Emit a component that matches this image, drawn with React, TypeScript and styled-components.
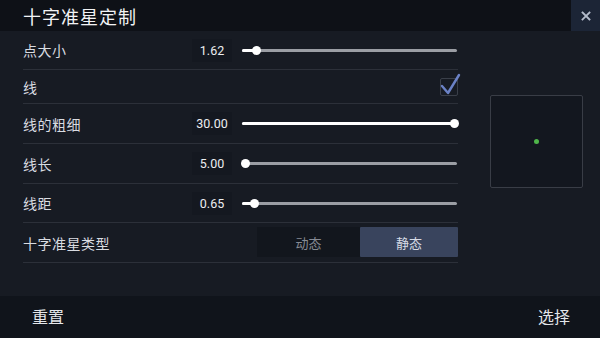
import React, { useState } from 'react';
import styled, { createGlobalStyle } from 'styled-components';

const GlobalStyle = createGlobalStyle`
  html, body {
    margin: 0;
    padding: 0;
    background: #171b23;
  }
  body {
    font-family: 'Noto Sans CJK SC', 'Noto Sans', sans-serif;
    color: #e6e8ec;
  }
`;

type SliderRow = {
  label: string;
  value: number;
  pos: number; // 0..1, where the thumb sits on the track
  height: number;
};

const TOP_ROWS: SliderRow[] = [{ label: '点大小', value: 1.62, pos: 0.054, height: 38 }];

const BOTTOM_ROWS: SliderRow[] = [
  { label: '线的粗细', value: 30, pos: 1, height: 39 },
  { label: '线长', value: 5, pos: 0, height: 39 },
  { label: '线距', value: 0.65, pos: 0.044, height: 38 },
];

const TRACK_W = 215;
const THUMB_INSET = 3;

const Slider = ({ pos }: { pos: number }) => {
  const x = THUMB_INSET + pos * (TRACK_W - THUMB_INSET * 2);
  return (
    <Track>
      <Fill style={{ width: `${x}px` }} />
      <Thumb style={{ left: `${x}px` }} />
    </Track>
  );
};

const App = () => {
  const [mode, setMode] = useState<'dynamic' | 'static'>('static');
  const [lineOn, setLineOn] = useState(true);

  const renderSlider = (r: SliderRow) => (
    <Row key={r.label} $h={r.height}>
      <Label>{r.label}</Label>
      <ValueBox>{r.value.toFixed(2)}</ValueBox>
      <Slider pos={r.pos} />
    </Row>
  );

  return (
    <>
      <GlobalStyle />
      <Screen>
        <Header>
          <Title>十字准星定制</Title>
          <CloseButton aria-label="close">
            <svg width="10" height="10" viewBox="0 0 10 10">
              <path d="M1.5 1.5 L8.5 8.5 M8.5 1.5 L1.5 8.5" stroke="#b4bccb" strokeWidth="1.8" strokeLinecap="square" />
            </svg>
          </CloseButton>
        </Header>
        <Body>
          <Settings>
            {TOP_ROWS.map(renderSlider)}
            <Row $h={33}>
              <Label>线</Label>
              <CheckBox onClick={() => setLineOn(!lineOn)}>
                {lineOn && (
                  <svg width="22" height="24" viewBox="0 0 22 24">
                    <path d="M2 13 L8 20 L19 2" stroke="#6b82c6" strokeWidth="2.4" fill="none" strokeLinecap="round" strokeLinejoin="round" />
                  </svg>
                )}
              </CheckBox>
            </Row>
            {BOTTOM_ROWS.map(renderSlider)}
            <Row $h={39}>
              <Label>十字准星类型</Label>
              <Segmented>
                <SegButton $w={103} $active={mode === 'dynamic'} onClick={() => setMode('dynamic')}>
                  动态
                </SegButton>
                <SegButton $w={98} $active={mode === 'static'} onClick={() => setMode('static')}>
                  静态
                </SegButton>
              </Segmented>
            </Row>
          </Settings>
          <PreviewColumn>
            <Preview>
              <Dot />
            </Preview>
          </PreviewColumn>
        </Body>
        <Footer>
          <FooterButton>重置</FooterButton>
          <FooterButton>选择</FooterButton>
        </Footer>
      </Screen>
    </>
  );
};

export default App;

const Screen = styled.div`
  width: 600px;
  height: 338px;
  display: flex;
  flex-direction: column;
  background: #171b23;
  overflow: hidden;
`;

const Header = styled.div`
  height: 31px;
  display: flex;
  align-items: center;
  justify-content: space-between;
  background: #0e1117;
  padding-left: 23px;
`;

const Title = styled.div`
  font-size: 18px;
  color: #f2f3f5;
  letter-spacing: 1px;
`;

const CloseButton = styled.div`
  width: 29px;
  height: 31px;
  display: flex;
  align-items: center;
  justify-content: center;
  background: #1c2536;
  cursor: pointer;
`;

const Body = styled.div`
  flex: 1;
  display: flex;
  padding-left: 23px;
`;

const Settings = styled.div`
  width: 435px;
  display: flex;
  flex-direction: column;
`;

const Row = styled.div<{ $h: number }>`
  height: ${({ $h }) => $h}px;
  display: flex;
  align-items: center;
  border-bottom: 1px solid #2c3039;
`;

const Label = styled.div`
  flex: 1;
  font-size: 14px;
  letter-spacing: 0.5px;
  color: #d9dce1;
`;

const ValueBox = styled.div`
  width: 40px;
  height: 23px;
  margin-right: 10px;
  display: flex;
  align-items: center;
  justify-content: center;
  background: #141820;
  font-family: Roboto, 'Liberation Sans', sans-serif;
  font-size: 12.5px;
  color: #eceef1;
`;

const Track = styled.div`
  position: relative;
  width: ${TRACK_W}px;
  height: 3px;
  margin-right: 1px;
  background: #9b9ea4;
  border-radius: 2px;
`;

const Fill = styled.div`
  height: 100%;
  background: #ffffff;
  border-radius: 2px;
`;

const Thumb = styled.div`
  position: absolute;
  top: 50%;
  width: 9px;
  height: 9px;
  margin-left: -4.5px;
  margin-top: -4.5px;
  border-radius: 50%;
  background: #ffffff;
`;

const CheckBox = styled.div`
  position: relative;
  width: 18px;
  height: 18px;
  box-sizing: border-box;
  border: 1px solid #3a3f49;
  border-radius: 2px;
  cursor: pointer;

  svg {
    position: absolute;
    left: -1px;
    top: -6px;
  }
`;

const Segmented = styled.div`
  display: flex;
  height: 30px;
  margin-top: -1px;
`;

const SegButton = styled.div<{ $active: boolean; $w: number }>`
  width: ${({ $w }) => $w}px;
  display: flex;
  align-items: center;
  justify-content: center;
  font-size: 13px;
  cursor: pointer;
  background: ${({ $active }) => ($active ? '#39445d' : '#12161d')};
  color: ${({ $active }) => ($active ? '#d7dce6' : '#868b94')};
  border-radius: 1px;
`;

const PreviewColumn = styled.div`
  flex: 1;
  padding-left: 32px;
  padding-top: 64px;
`;

const Preview = styled.div`
  width: 93px;
  height: 93px;
  box-sizing: border-box;
  border: 1px solid #393d46;
  border-radius: 2px;
  background: #13171f;
  display: flex;
  align-items: center;
  justify-content: center;
`;

const Dot = styled.div`
  width: 5px;
  height: 5px;
  border-radius: 50%;
  background: #4fb64a;
`;

const Footer = styled.div`
  height: 40px;
  display: flex;
  align-items: center;
  justify-content: space-between;
  padding: 0 30px 2px 32px;
  background: #10141b;
`;

const FooterButton = styled.div`
  font-size: 16px;
  color: #e4e6ea;
  cursor: pointer;
`;
